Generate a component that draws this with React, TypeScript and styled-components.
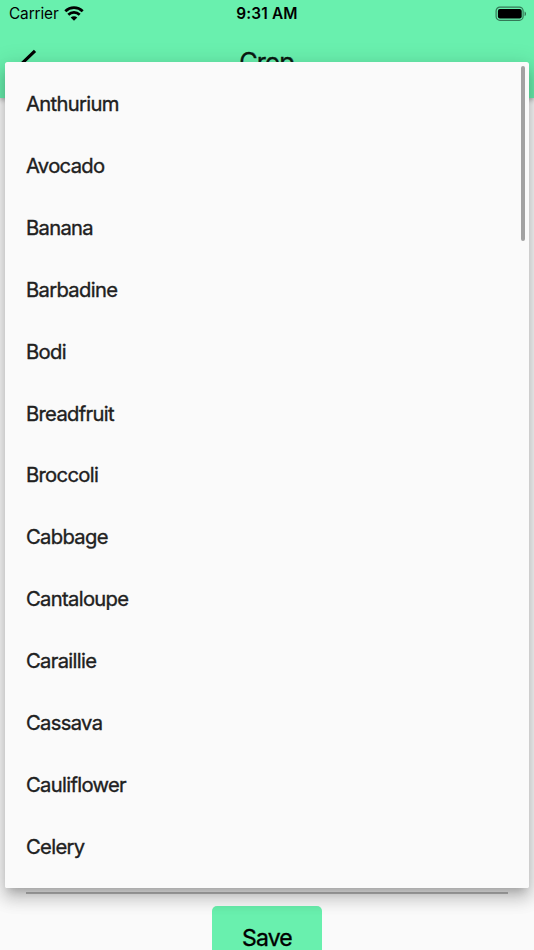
import React from "react";
import styled, { createGlobalStyle } from "styled-components";

const GlobalStyle = createGlobalStyle`
  * { box-sizing: border-box; }
  body {
    margin: 0;
    background: #fafafa;
    font-family: Inter, "Liberation Sans", sans-serif;
    color: #000;
  }
`;

const Screen = styled.div`
  position: relative;
  display: flex;
  flex-direction: column;
  width: 534px;
  height: 950px;
  overflow: hidden;
  background: #fafafa;
`;

const Header = styled.header`
  height: 98px;
  flex: none;
  background: #69f0ae;
  box-shadow: 0 2px 5px rgba(0, 0, 0, 0.3);
`;

const StatusBar = styled.div`
  display: grid;
  grid-template-columns: 1fr auto 1fr;
  align-items: center;
  height: 26px;
  padding: 1px 8px 0 9px;
  line-height: 26px;
`;

const Carrier = styled.div`
  display: flex;
  align-items: center;
  gap: 5px;
  font-size: 15.4px;
  letter-spacing: -0.12px;

  svg { margin-top: -2px; }
`;

const Clock = styled.div`
  margin-left: -1px;
  font-size: 15.4px;
  font-weight: 600;
  letter-spacing: 0.15px;
`;

const Battery = styled.svg`
  justify-self: end;
  margin: -1px -1px 0 0;
`;

const TitleBar = styled.div`
  display: grid;
  grid-template-columns: 1fr auto 1fr;
  align-items: center;
  height: 72px;
  padding: 0 19px 0 18px;
`;

const Title = styled.h1`
  margin: 0;
  font-size: 25.3px;
  font-weight: 400;
  line-height: 30px;
  letter-spacing: -0.9px;
  -webkit-text-stroke: 0.3px currentColor;
  color: #0a1811;
`;

const Form = styled.main`
  flex: 1;
  display: flex;
  flex-direction: column;
  align-items: center;
  justify-content: flex-end;
  padding: 0 26px;
`;

const Underline = styled.div`
  align-self: stretch;
  height: 2px;
  margin-bottom: 12px;
  background: #bababa;
`;

const SaveButton = styled.button`
  flex: none;
  width: 110px;
  height: 62px;
  margin-bottom: -18px;
  padding: 2px 0 0;
  border: 0;
  border-radius: 5px;
  background: #69f0ae;
  font: 400 23px/22px Inter, "Liberation Sans", sans-serif;
  letter-spacing: -0.85px;
  -webkit-text-stroke: 0.35px currentColor;
  color: #000;
`;

const Menu = styled.div`
  position: absolute;
  top: 62px;
  left: 5.3px;
  right: 5.3px;
  height: 825.5px;
  padding-top: 10.6px;
  overflow: hidden;
  border-radius: 2.6px;
  background: #fafafa;
`;

const MenuShadow = styled.div`
  position: absolute;
  top: 62px;
  left: 5.3px;
  right: 5.3px;
  height: 825.5px;
  border-radius: 2.6px;
  box-shadow:
    0 6.5px 8.8px -4px rgba(0, 0, 0, 0.2),
    0 10.3px 16.2px 1.3px rgba(0, 0, 0, 0.14),
    0 4px 22px 2.6px rgba(0, 0, 0, 0.12);
`;

const List = styled.ul`
  margin: 0;
  padding: 0;
  list-style: none;
`;

const Item = styled.li`
  display: flex;
  align-items: center;
  height: 61.92px;
  padding-left: 20.7px;
  font-size: 20.2px;
  font-weight: 400;
  letter-spacing: -0.67px;
  -webkit-text-stroke: 0.35px currentColor;
  color: #202020;
`;

const ScrollThumb = styled.div`
  position: absolute;
  top: 4px;
  right: 3.7px;
  width: 4px;
  height: 175px;
  border-radius: 2px;
  background: #a2a2a2;
`;

const crops = [
  "Anthurium",
  "Avocado",
  "Banana",
  "Barbadine",
  "Bodi",
  "Breadfruit",
  "Broccoli",
  "Cabbage",
  "Cantaloupe",
  "Caraillie",
  "Cassava",
  "Cauliflower",
  "Celery",
];

const WifiIcon = () => (
  <svg width="20" height="15" viewBox="0 0 20 15" fill="none" stroke="#000" strokeWidth="2.8">
    <path d="M1.3 5.2C6.2.5 13.8.5 18.7 5.2" />
    <path d="M4.3 8.7C7.5 5.7 12.5 5.7 15.7 8.7" />
    <path d="M10 14.8 6.7 11.5C8.5 9.9 11.5 9.9 13.3 11.5Z" fill="#000" stroke="none" />
  </svg>
);

const BatteryIcon = () => (
  <Battery width="32" height="16" viewBox="0 0 32 16">
    <rect x="1.1" y="1.1" width="27" height="13.2" rx="3.8" fill="none" stroke="#000" strokeOpacity=".5" strokeWidth="1.2" />
    <rect x="2.9" y="2.9" width="23.8" height="9.6" rx="2" fill="#000" />
    <path d="M29.6 5.4v4.6c1.8-.7 1.8-3.9 0-4.6Z" fill="#000" fillOpacity=".55" />
  </Battery>
);

const BackIcon = () => (
  <svg width="20" height="26" viewBox="0 0 20 26" fill="none" stroke="#000" strokeWidth="3.2">
    <path d="M17 1.8 4.2 14.2 17 25.8" />
  </svg>
);

export default function App() {
  return (
    <>
      <GlobalStyle />
      <Screen>
        <Header>
          <StatusBar>
            <Carrier>Carrier <WifiIcon /></Carrier>
            <Clock>9:31 AM</Clock>
            <BatteryIcon />
          </StatusBar>
          <TitleBar>
            <BackIcon />
            <Title>Crop</Title>
          </TitleBar>
        </Header>
        <Form>
          <Underline />
          <SaveButton>Save</SaveButton>
        </Form>
        <MenuShadow />
        <Menu>
          <List>
            {crops.map((name) => (
              <Item key={name}>{name}</Item>
            ))}
          </List>
          <ScrollThumb />
        </Menu>
      </Screen>
    </>
  );
}
